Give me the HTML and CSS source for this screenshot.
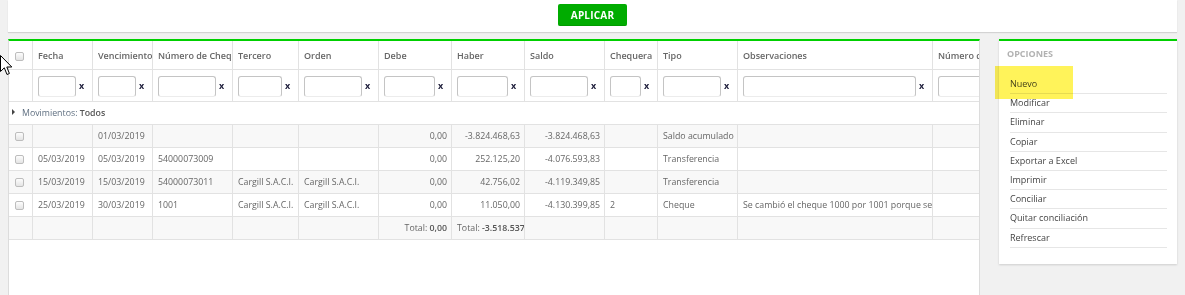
FILE: index.html
```html
<!DOCTYPE html>
<html>
<head>
<meta charset="utf-8"/>
    <title>Movimientos</title>
    <link rel="stylesheet" href="styles.css">
</head>
<body>
    <div id="page">
        <div class="topbar">
            <button class="btn-apply">APLICAR</button>
        </div>

        <div class="main">
            <div class="grid-panel">
                <table class="grid">
                    <colgroup>
                        <col style="width:24px"><col style="width:60px"><col style="width:60px"><col style="width:80px">
                        <col style="width:66px"><col style="width:80px"><col style="width:73px"><col style="width:73px">
                        <col style="width:80px"><col style="width:53px"><col style="width:80px"><col style="width:195px">
                        <col style="width:100px">
                    </colgroup>
                    <thead>
                        <tr class="head">
                            <th><span class="chk"></span></th>
                            <th>Fecha</th>
                            <th>Vencimiento</th>
                            <th>Número de Cheque</th>
                            <th>Tercero</th>
                            <th>Orden</th>
                            <th>Debe</th>
                            <th>Haber</th>
                            <th>Saldo</th>
                            <th>Chequera</th>
                            <th>Tipo</th>
                            <th>Observaciones</th>
                            <th>Número de Conciliación</th>
                        </tr>
                        <tr class="filters">
                            <td></td>
                            <td><div class="filter"><input type="text"><span class="clear">x</span></div></td>
                            <td><div class="filter"><input type="text"><span class="clear">x</span></div></td>
                            <td><div class="filter"><input type="text"><span class="clear">x</span></div></td>
                            <td><div class="filter"><input type="text"><span class="clear">x</span></div></td>
                            <td><div class="filter"><input type="text"><span class="clear">x</span></div></td>
                            <td><div class="filter"><input type="text"><span class="clear">x</span></div></td>
                            <td><div class="filter"><input type="text"><span class="clear">x</span></div></td>
                            <td><div class="filter"><input type="text"><span class="clear">x</span></div></td>
                            <td><div class="filter"><input type="text"><span class="clear">x</span></div></td>
                            <td><div class="filter"><input type="text"><span class="clear">x</span></div></td>
                            <td><div class="filter"><input type="text"><span class="clear">x</span></div></td>
                            <td><div class="filter"><input type="text"><span class="clear">x</span></div></td>
                        </tr>
                    </thead>
                    <tbody>
                        <tr class="group">
                            <td colspan="13"><span class="caret"></span>Movimientos: <b>Todos</b></td>
                        </tr>
                        <tr class="odd">
                            <td><span class="chk"></span></td>
                            <td></td>
                            <td>01/03/2019</td>
                            <td></td>
                            <td></td>
                            <td></td>
                            <td class="num">0,00</td>
                            <td class="num">-3.824.468,63</td>
                            <td class="num">-3.824.468,63</td>
                            <td></td>
                            <td>Saldo acumulado</td>
                            <td></td>
                            <td></td>
                        </tr>
                        <tr>
                            <td><span class="chk"></span></td>
                            <td>05/03/2019</td>
                            <td>05/03/2019</td>
                            <td>54000073009</td>
                            <td></td>
                            <td></td>
                            <td class="num">0,00</td>
                            <td class="num">252.125,20</td>
                            <td class="num">-4.076.593,83</td>
                            <td></td>
                            <td>Transferencia</td>
                            <td></td>
                            <td></td>
                        </tr>
                        <tr class="odd">
                            <td><span class="chk"></span></td>
                            <td>15/03/2019</td>
                            <td>15/03/2019</td>
                            <td>54000073011</td>
                            <td>Cargill S.A.C.I.</td>
                            <td>Cargill S.A.C.I.</td>
                            <td class="num">0,00</td>
                            <td class="num">42.756,02</td>
                            <td class="num">-4.119.349,85</td>
                            <td></td>
                            <td>Transferencia</td>
                            <td></td>
                            <td></td>
                        </tr>
                        <tr>
                            <td><span class="chk"></span></td>
                            <td>25/03/2019</td>
                            <td>30/03/2019</td>
                            <td>1001</td>
                            <td>Cargill S.A.C.I.</td>
                            <td>Cargill S.A.C.I.</td>
                            <td class="num">0,00</td>
                            <td class="num">11.050,00</td>
                            <td class="num">-4.130.399,85</td>
                            <td>2</td>
                            <td>Cheque</td>
                            <td>Se cambió el cheque 1000 por 1001 porque se rompió</td>
                            <td></td>
                        </tr>
                        <tr class="odd total">
                            <td></td>
                            <td></td>
                            <td></td>
                            <td></td>
                            <td></td>
                            <td></td>
                            <td class="num">Total: <b>0,00</b></td>
                            <td class="num">Total: <b>-3.518.537,45</b></td>
                            <td></td>
                            <td></td>
                            <td></td>
                            <td></td>
                            <td></td>
                        </tr>
                    </tbody>
                </table>
            </div>

            <div class="options">
                <div class="options-title">OPCIONES</div>
                <ul class="options-list">
                    <li>Nuevo</li>
                    <li>Modificar</li>
                    <li>Eliminar</li>
                    <li>Copiar</li>
                    <li>Exportar a Excel</li>
                    <li>Imprimir</li>
                    <li>Conciliar</li>
                    <li>Quitar conciliación</li>
                    <li>Refrescar</li>
                </ul>
            </div>
        </div>

        <!-- marker over "Nuevo" -->
        <div class="highlight"></div>

        <svg class="cursor" width="13" height="21" viewBox="0 0 13 21">
            <path d="M0.5 0.5 L0.5 16.5 L4.3 12.8 L7 19.5 L9.4 18.5 L6.8 12 L11.8 12 Z" fill="#fff" stroke="#000" stroke-width="1" stroke-linejoin="round"/>
        </svg>
    </div>
</body>
</html>
```

FILE: styles.css
```css
        body {
            margin: 0;
            background: #f1f1f1;
            font-family: "Open Sans", "DejaVu Sans", sans-serif;
            font-size: 8.8px;
            color: #666;
        }
        #page {
            position: relative;
            height: 295px;
            overflow: hidden;
        }
        .topbar {
            margin: 0 8px;
            height: 32px;
            background: white;
            box-shadow: 0 1px 1px rgba(0,0,0,0.12);
            display: flex;
            justify-content: center;
            align-items: flex-start;
            padding-top: 4px;
            box-sizing: border-box;
        }
        .btn-apply {
            width: 69px;
            height: 22px;
            background: #00ac00;
            border: none;
            border-bottom: 1px solid #009a00;
            border-radius: 2px;
            color: white;
            font-family: "Open Sans", sans-serif;
            font-weight: bold;
            font-size: 10px;
            letter-spacing: 0.2px;
            padding: 0;
        }
        .main {
            display: flex;
            align-items: flex-start;
            gap: 19px;
            margin-top: 7px;
            padding-left: 8px;
        }
        .grid-panel {
            width: 972px;
            height: 260px;
            box-sizing: border-box;
            background: white;
            border-top: 2px solid #00d000;
            border-left: 1px solid #dcdcdc;
            border-right: 1px solid #dcdcdc;
            overflow: hidden;
        }
        .grid {
            table-layout: fixed;
            width: 924px;
            border-collapse: separate;
            border-spacing: 0;
        }
        .grid th, .grid td {
            border-right: 1px solid #e2e2e2;
            border-bottom: 1px solid #e2e2e2;
            white-space: nowrap;
            overflow: hidden;
            padding: 0 4px 0 5px;
            text-align: left;
            box-sizing: border-box;
        }
        .grid th {
            height: 29px;
            font-weight: 600;
            font-size: 9px;
            color: #666;
            padding-right: 0;
        }
        .filters td {
            height: 32px;
            padding: 0 5px 0 5px;
        }
        .filter {
            display: flex;
            align-items: center;
            gap: 3px;
        }
        .filter input {
            flex: 1;
            min-width: 0;
            height: 21px;
            box-sizing: border-box;
            border: 1px solid #c4c4c4;
            border-bottom-color: #ececec;
            border-radius: 3px;
            padding: 0;
            margin: 0 0 -2px 0;
        }
        .clear {
            width: 8px;
            font-weight: bold;
            color: #1d1d3a;
            font-size: 9px;
        }
        .grid tbody td {
            height: 23px;
        }
        .grid tr.group td {
            border-right: none;
            padding-left: 3px;
            color: #5f6f80;
        }
        .group b {
            color: #555;
            font-weight: 600;
        }
        .caret {
            display: inline-block;
            width: 0;
            height: 0;
            border-left: 3px solid #444;
            border-top: 3px solid transparent;
            border-bottom: 3px solid transparent;
            margin-right: 7px;
            vertical-align: 1px;
        }
        .grid tr.odd td {
            background: #f8f8f8;
        }
        .grid td.num {
            text-align: right;
            padding-right: 4px;
        }
        .total b {
            font-weight: 600;
            color: #555;
        }
        .chk {
            display: inline-block;
            width: 7px;
            height: 7px;
            border: 1px solid #bdbdbd;
            border-radius: 2px;
            background: linear-gradient(#fdfdfd, #e4e4e4);
            vertical-align: middle;
            margin-left: 1px;
        }
        .options {
            width: 178px;
            height: 225px;
            box-sizing: border-box;
            background: white;
            border-top: 2px solid #00d000;
            box-shadow: 0 1px 2px rgba(0,0,0,0.15);
        }
        .options-title {
            height: 34px;
            box-sizing: border-box;
            padding: 7px 0 0 8px;
            line-height: 12px;
            font-size: 9px;
            font-weight: bold;
            color: #b2b2b2;
        }
        .options-list {
            list-style: none;
            margin: 0 10px 0 11px;
            padding: 0;
        }
        .options-list li {
            padding: 3px 0;
            line-height: 12.2px;
            border-bottom: 1px solid #e6e6e6;
            color: #444;
            font-size: 9px;
        }
        .highlight {
            position: absolute;
            left: 995px;
            top: 66px;
            width: 78px;
            height: 33px;
            background: #fff35a;
            mix-blend-mode: multiply;
        }
        .cursor {
            position: absolute;
            left: 0;
            top: 55px;
        }
```
